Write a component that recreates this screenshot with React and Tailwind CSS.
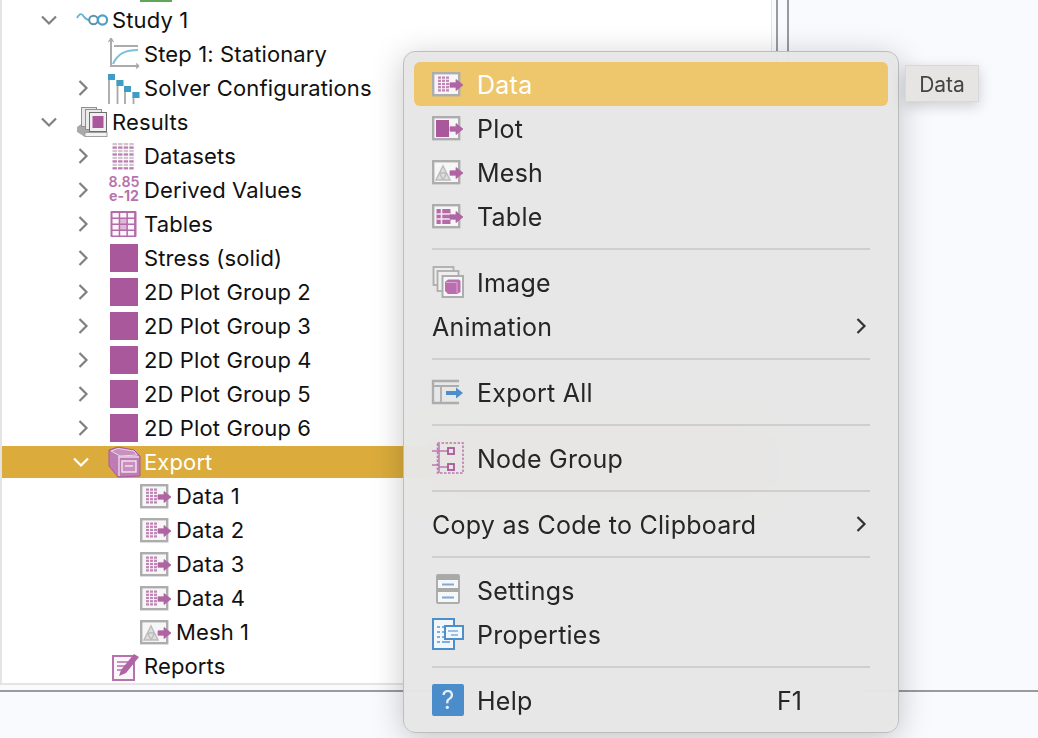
import React from "react";

const PURPLE = "#a9589c";
const ARROW = "#b064a4";
const GRAY = "#adadad";

function Chevron({ down, color = "#808080", className }) {
  return (
    <svg width="18" height="18" viewBox="0 0 18 18" className={className} fill="none">
      <path d={down ? "M2 5.5 L9 12.5 L16 5.5" : "M5.5 2 L12.5 9 L5.5 16"} stroke={color} strokeWidth="2.2" />
    </svg>
  );
}

function Ico({ children }) {
  return (
    <svg width="32" height="32" viewBox="0 0 32 32" fill="none" className="shrink-0 overflow-visible">
      {children}
    </svg>
  );
}

// gray frame with the arrow running out of its right side
function ArrowFrame({ children, color = ARROW }) {
  return (
    <Ico>
      <rect x="1.2" y="5.2" width="26" height="22" fill="#f6f6f6" stroke={GRAY} strokeWidth="2.4" />
      {children}
      <path d="M18 14.8 H24 V11.5 L31 17 L24 22.5 V19.2 H18 Z" fill={color} stroke={color} strokeWidth="0.8" strokeLinejoin="round" />
    </Ico>
  );
}

function DataIcon() {
  const cells = [];
  for (let r = 0; r < 5; r++) {
    for (let c = 0; c < 3; c++) {
      cells.push(<rect key={r + "-" + c} x={6 + c * 4} y={8.5 + r * 3.2} width="3" height="2.2" fill="#c084b6" />);
    }
  }
  return <ArrowFrame>{cells}</ArrowFrame>;
}

function PlotIcon() {
  return (
    <ArrowFrame>
      <rect x="4" y="8" width="13" height="17" fill={PURPLE} />
    </ArrowFrame>
  );
}

function MeshIcon() {
  return (
    <ArrowFrame>
      <path d="M11 10 L18 24 H4 Z M7.5 17 H14.5 M11 24 L7.5 17 M11 24 L14.5 17" stroke="#bcbcbc" strokeWidth="1.5" fill="#dedede" />
    </ArrowFrame>
  );
}

function TableExportIcon() {
  return (
    <ArrowFrame>
      <rect x="4.5" y="9" width="14" height="15" fill="#b56aa9" />
      <path d="M4.5 14 H18.5 M4.5 19 H18.5 M9.5 9 V24" stroke="#f3e8f1" strokeWidth="1.6" />
    </ArrowFrame>
  );
}

function StudyIcon() {
  return (
    <Ico>
      <path d="M1 14 C3 10 5 9 7 11.5 C9 14 10 16 13 16" stroke="#62b4d3" strokeWidth="1.8" />
      <circle cx="17.5" cy="16" r="4.3" stroke="#5f93ad" strokeWidth="2" />
      <circle cx="26.5" cy="16" r="4.6" stroke="#4e9fc4" strokeWidth="2.2" />
    </Ico>
  );
}

function StepIcon() {
  return (
    <Ico>
      <path d="M3 1 V28 H30" stroke="#ababab" strokeWidth="2" />
      <path d="M3 0 L0.5 4 M3 0 L5.5 4 M31 28 L28 25.5 M31 28 L28 30.5" stroke="#a6a6a6" strokeWidth="1.2" />
      <path d="M6 8 H30" stroke="#ababab" strokeWidth="2" />
      <path d="M5 26 C10 15 18 12 30 12" stroke="#7cc0d8" strokeWidth="2" />
    </Ico>
  );
}

function SolverIcon() {
  return (
    <Ico>
      <path d="M1 2 V32 M9.5 8 V32 M17 14 V32 M25.5 20 V32" stroke="#a8a8a8" strokeWidth="1.8" />
      <rect x="0" y="2" width="7" height="6" fill="#3f9cc4" />
      <rect x="8.5" y="8" width="7" height="6" fill="#3f9cc4" />
      <rect x="16" y="14" width="7" height="6" fill="#3f9cc4" />
      <rect x="24.5" y="20" width="7" height="6" fill="#3f9cc4" />
    </Ico>
  );
}

function ResultsIcon() {
  return (
    <Ico>
      <path d="M1 21 L8 16 H31 V31 H9 L1 26 Z" fill="#a9a9a9" />
      <rect x="9" y="26.5" width="22" height="4" fill="#f2f2f2" stroke="#a0a0a0" />
      <rect x="5.5" y="1.5" width="15" height="19" fill="#e8e8e8" stroke="#8f8f8f" />
      <rect x="9.5" y="3.5" width="16" height="20" fill="#ececec" stroke="#8f8f8f" />
      <rect x="13.5" y="6.5" width="17" height="19" fill="#f0f0f0" stroke="#6f6f6f" />
      <rect x="16.5" y="10" width="11" height="12" fill={PURPLE} />
    </Ico>
  );
}

function DatasetsIcon() {
  const cells = [];
  for (let r = 0; r < 8; r++) {
    for (let c = 0; c < 4; c++) {
      cells.push(
        <rect key={r + "-" + c} x={4.5 + c * 5.6} y={3 + r * 3.45} width="4.4" height="2.3" fill={r % 2 === 0 ? "#cdc6cc" : "#bd7cb3"} />
      );
    }
  }
  return <Ico>{cells}</Ico>;
}

function DerivedIcon() {
  return (
    <Ico>
      <text x="16" y="13" textAnchor="middle" fontSize="15" fontWeight="600" textLength="31" lengthAdjust="spacingAndGlyphs" fontFamily="Inter, sans-serif" fill="#b872ad">8.85</text>
      <text x="16" y="27" textAnchor="middle" fontSize="14" fontWeight="700" textLength="30" lengthAdjust="spacingAndGlyphs" fontFamily="Inter, sans-serif" fill="#b872ad">e-12</text>
    </Ico>
  );
}

function TablesIcon() {
  const cells = [];
  for (let r = 0; r < 4; r++) {
    for (let c = 0; c < 3; c++) {
      const lilac = (r === 1 || r === 2) && c === 1;
      cells.push(<rect key={r + "-" + c} x={4.5 + c * 7.7} y={5 + r * 6} width="6.2" height="4.5" fill={lilac ? "#dcb9d6" : "#fbf6fa"} />);
    }
  }
  return (
    <Ico>
      <rect x="2.5" y="3" width="26" height="26" fill="#b56aa9" rx="1" />
      {cells}
    </Ico>
  );
}

function PlotGroupIcon() {
  return (
    <Ico>
      <rect x="2" y="2" width="28" height="28" fill={PURPLE} />
    </Ico>
  );
}

function ExportBoxIcon() {
  return (
    <Ico>
      <path d="M1 4 L10 1 L26 4 L32 10 V30 L10 31 L1 20 Z" fill="#bd7cb3" stroke="#a9589c" strokeWidth="1" />
      <path d="M3 5 L10 2.5 L26 5 L29 9 L12 10 Z" fill="#c790bd" stroke="#ead8e7" strokeWidth="1" />
      <path d="M10 11 H31 M11 11 V30" stroke="#ead8e7" strokeWidth="1.4" />
      <rect x="14" y="15" width="14" height="11" fill="#c88fbf" stroke="#f3e8f1" strokeWidth="1.4" />
      <path d="M17 20 H25" stroke="#f3e8f1" strokeWidth="1.4" />
    </Ico>
  );
}

function ReportsIcon() {
  return (
    <Ico>
      <rect x="5" y="6" width="21" height="24" fill="#fbf6fa" stroke="#b872ad" strokeWidth="2" />
      <path d="M9 12 H20 M9 16 H18 M9 20 H14" stroke="#b872ad" strokeWidth="1.6" />
      <path d="M11 26 L13 20 L26 4 L31 7 L18 23 Z" fill={ARROW} />
    </Ico>
  );
}

function ImageIcon() {
  return (
    <Ico>
      <rect x="1.5" y="1" width="20" height="18" fill="#ececec" stroke={GRAY} strokeWidth="1.8" />
      <rect x="5.5" y="5" width="21" height="20" fill="#efefef" stroke={GRAY} strokeWidth="1.8" />
      <rect x="10.5" y="10" width="20.5" height="21" fill="#f6f6f6" stroke={GRAY} strokeWidth="2" />
      <path d="M13 16 L16 13.5 H27 L28.5 15 V26 L25 28 H16 L13 25 Z" fill="#bb6eaf" />
      <path d="M14 16.5 H25 V27" stroke="#d9a9d0" strokeWidth="1" />
    </Ico>
  );
}

function ExportAllIcon() {
  return (
    <Ico>
      <path d="M27 5 H1 V27 H27" stroke={GRAY} strokeWidth="2.4" />
      <path d="M1 10 H27 M9 10 V27" stroke={GRAY} strokeWidth="1.8" />
      <path d="M14 15 H24 V11.5 L31 17 L24 22.5 V19 H14 Z" fill="#4e8fcb" />
    </Ico>
  );
}

function NodeGroupIcon() {
  return (
    <Ico>
      <rect x="5.5" y="1" width="25.5" height="30" stroke="#bb78b0" strokeWidth="1.5" strokeDasharray="2.5 1.5" />
      <path d="M0 9 H7 M0 23 H7 M7 2 V31 M7 9 H16 M7 25 H16" stroke="#bb78b0" strokeWidth="1.5" />
      <rect x="16" y="6" width="6" height="6" fill="none" stroke={PURPLE} strokeWidth="1.8" />
      <rect x="16" y="22" width="6" height="6" fill="none" stroke={PURPLE} strokeWidth="1.8" />
    </Ico>
  );
}

function SettingsIcon() {
  return (
    <Ico>
      <rect x="5" y="1" width="22" height="28" fill="#f7f7f7" stroke={GRAY} strokeWidth="2" rx="1" />
      <rect x="5" y="1" width="22" height="5" fill="#a9a9a9" />
      <rect x="5" y="14" width="22" height="4" fill="#a9a9a9" />
      <path d="M10 10.5 H22 M10 23.5 H22" stroke="#7ea9d3" strokeWidth="2" />
    </Ico>
  );
}

function PropertiesIcon() {
  return (
    <Ico>
      <rect x="1" y="1" width="21" height="30" fill="#f2f7fc" stroke="#4e8fcb" strokeWidth="2" />
      <path d="M5 9 H8 M10 9 H18 M5 14 H8 M10 14 H18 M5 19 H8 M10 19 H18 M5 24 H8 M10 24 H18" stroke="#7eaedb" strokeWidth="1.8" />
      <rect x="13" y="8" width="18" height="13" fill="#f2f7fc" stroke="#4e8fcb" strokeWidth="2" />
      <path d="M16 13 H26 M19 17 H26" stroke="#7eaedb" strokeWidth="1.6" />
    </Ico>
  );
}

function HelpIcon() {
  return (
    <div className="flex h-8 w-8 shrink-0 items-center justify-center rounded-[2px] bg-[#4b8ccb] text-[25px] leading-none text-[#e4eef8]">?</div>
  );
}

const INDENT = ["pl-[34px]", "pl-[66px]", "pl-[98px]"];
const CHEVRON_ML = ["ml-[4px]", "ml-[6px]", "ml-0"];

const TREE = [
  { depth: 0, open: true, label: "Study 1", icon: <StudyIcon /> },
  { depth: 1, label: "Step 1: Stationary", icon: <StepIcon /> },
  { depth: 1, closed: true, label: "Solver Configurations", icon: <SolverIcon /> },
  { depth: 0, open: true, label: "Results", icon: <ResultsIcon /> },
  { depth: 1, closed: true, label: "Datasets", icon: <DatasetsIcon /> },
  { depth: 1, closed: true, label: "Derived Values", icon: <DerivedIcon /> },
  { depth: 1, closed: true, label: "Tables", icon: <TablesIcon /> },
  { depth: 1, closed: true, label: "Stress (solid)", icon: <PlotGroupIcon /> },
  { depth: 1, closed: true, label: "2D Plot Group 2", icon: <PlotGroupIcon /> },
  { depth: 1, closed: true, label: "2D Plot Group 3", icon: <PlotGroupIcon /> },
  { depth: 1, closed: true, label: "2D Plot Group 4", icon: <PlotGroupIcon /> },
  { depth: 1, closed: true, label: "2D Plot Group 5", icon: <PlotGroupIcon /> },
  { depth: 1, closed: true, label: "2D Plot Group 6", icon: <PlotGroupIcon /> },
  { depth: 1, open: true, selected: true, label: "Export", icon: <ExportBoxIcon /> },
  { depth: 2, label: "Data 1", icon: <DataIcon /> },
  { depth: 2, label: "Data 2", icon: <DataIcon /> },
  { depth: 2, label: "Data 3", icon: <DataIcon /> },
  { depth: 2, label: "Data 4", icon: <DataIcon /> },
  { depth: 2, label: "Mesh 1", icon: <MeshIcon /> },
  { depth: 1, label: "Reports", icon: <ReportsIcon /> },
];

function TreeRow({ row }) {
  return (
    <div className="h-[34px] py-px">
      <div className={"flex h-8 items-center " + INDENT[row.depth] + (row.selected ? " bg-[#dbac3c] text-white" : " text-[#111111]")}>
        <div className="flex w-10 shrink-0 items-center">
          {row.open && <Chevron down color={row.selected ? "#ffffff" : "#808080"} className={row.selected ? "ml-[4px]" : CHEVRON_ML[row.depth]} />}
          {row.closed && <Chevron className={CHEVRON_ML[row.depth]} />}
        </div>
        {row.icon}
        <span className="ml-1 whitespace-nowrap text-[22px] leading-none tracking-[0.12px]">{row.label}</span>
      </div>
    </div>
  );
}

function MenuItem({ icon, label, active, arrow, shortcut }) {
  return (
    <div className={"flex h-11 items-center rounded-[6px] pl-[18px] pr-[18px] " + (active ? "bg-[#eec66b] text-white" : "text-[#262626]")}>
      {icon}
      <span className={"mt-[3px] whitespace-nowrap text-[25px] leading-none tracking-[0.25px] " + (icon ? "ml-[13px]" : "")}>{label}</span>
      {arrow && <Chevron color="#333333" className="ml-auto" />}
      {shortcut && <span className="ml-auto mr-[68px] mt-[3px] text-[25px] leading-none">{shortcut}</span>}
    </div>
  );
}

function Sep() {
  return (
    <div className="flex h-[22px] items-center px-[18px]">
      <div className="h-[2px] w-full bg-[#cfcfcf]" />
    </div>
  );
}

export default function App() {
  return (
    <div className="relative h-[738px] w-[1038px] overflow-hidden bg-[#f9fafe] font-['Inter',sans-serif]">
      <div className="flex h-[690px]">
        <div className="h-[685px] w-[772px] border-b-2 border-l-2 border-r border-[#e4e4e4] bg-white">
          <div className="h-[3px]">
            <div className="ml-[138px] h-[2px] w-8 bg-[#5fa85a]" />
          </div>
          {TREE.map((row) => (
            <TreeRow key={row.label} row={row} />
          ))}
        </div>
        <div className="ml-[4px] w-[2px] bg-[#9a9a9a]" />
        <div className="ml-[9px] w-[2px] bg-[#9a9a9a]" />
      </div>
      <div className="h-[2px] bg-[#9a9a9a]" />

      {/* context menu */}
      <div className="absolute left-[403px] top-[51px] h-[682px] w-[496px] rounded-[12px] border border-[#bdbdbd] bg-[#e6e6e6]/95 pb-[10px] pl-[10px] pr-[10px] pt-[10px] shadow-[0_6px_32px_rgba(0,0,0,0.22)] backdrop-blur-2xl">
        <MenuItem active icon={<DataIcon />} label="Data" />
        <MenuItem icon={<PlotIcon />} label="Plot" />
        <MenuItem icon={<MeshIcon />} label="Mesh" />
        <MenuItem icon={<TableExportIcon />} label="Table" />
        <Sep />
        <MenuItem icon={<ImageIcon />} label="Image" />
        <MenuItem label="Animation" arrow />
        <Sep />
        <MenuItem icon={<ExportAllIcon />} label="Export All" />
        <Sep />
        <MenuItem icon={<NodeGroupIcon />} label="Node Group" />
        <Sep />
        <MenuItem label="Copy as Code to Clipboard" arrow />
        <Sep />
        <MenuItem icon={<SettingsIcon />} label="Settings" />
        <MenuItem icon={<PropertiesIcon />} label="Properties" />
        <Sep />
        <MenuItem icon={<HelpIcon />} label="Help" shortcut="F1" />
      </div>

      {/* tooltip */}
      <div className="absolute left-[905px] top-[65px] flex h-[37px] w-[74px] items-center justify-center border border-[#d8d8d6] bg-[#e6e5e3] pt-[2px] text-[21px] leading-none text-[#444444] shadow-[0_4px_14px_rgba(0,0,0,0.18)]">
        Data
      </div>
    </div>
  );
}
